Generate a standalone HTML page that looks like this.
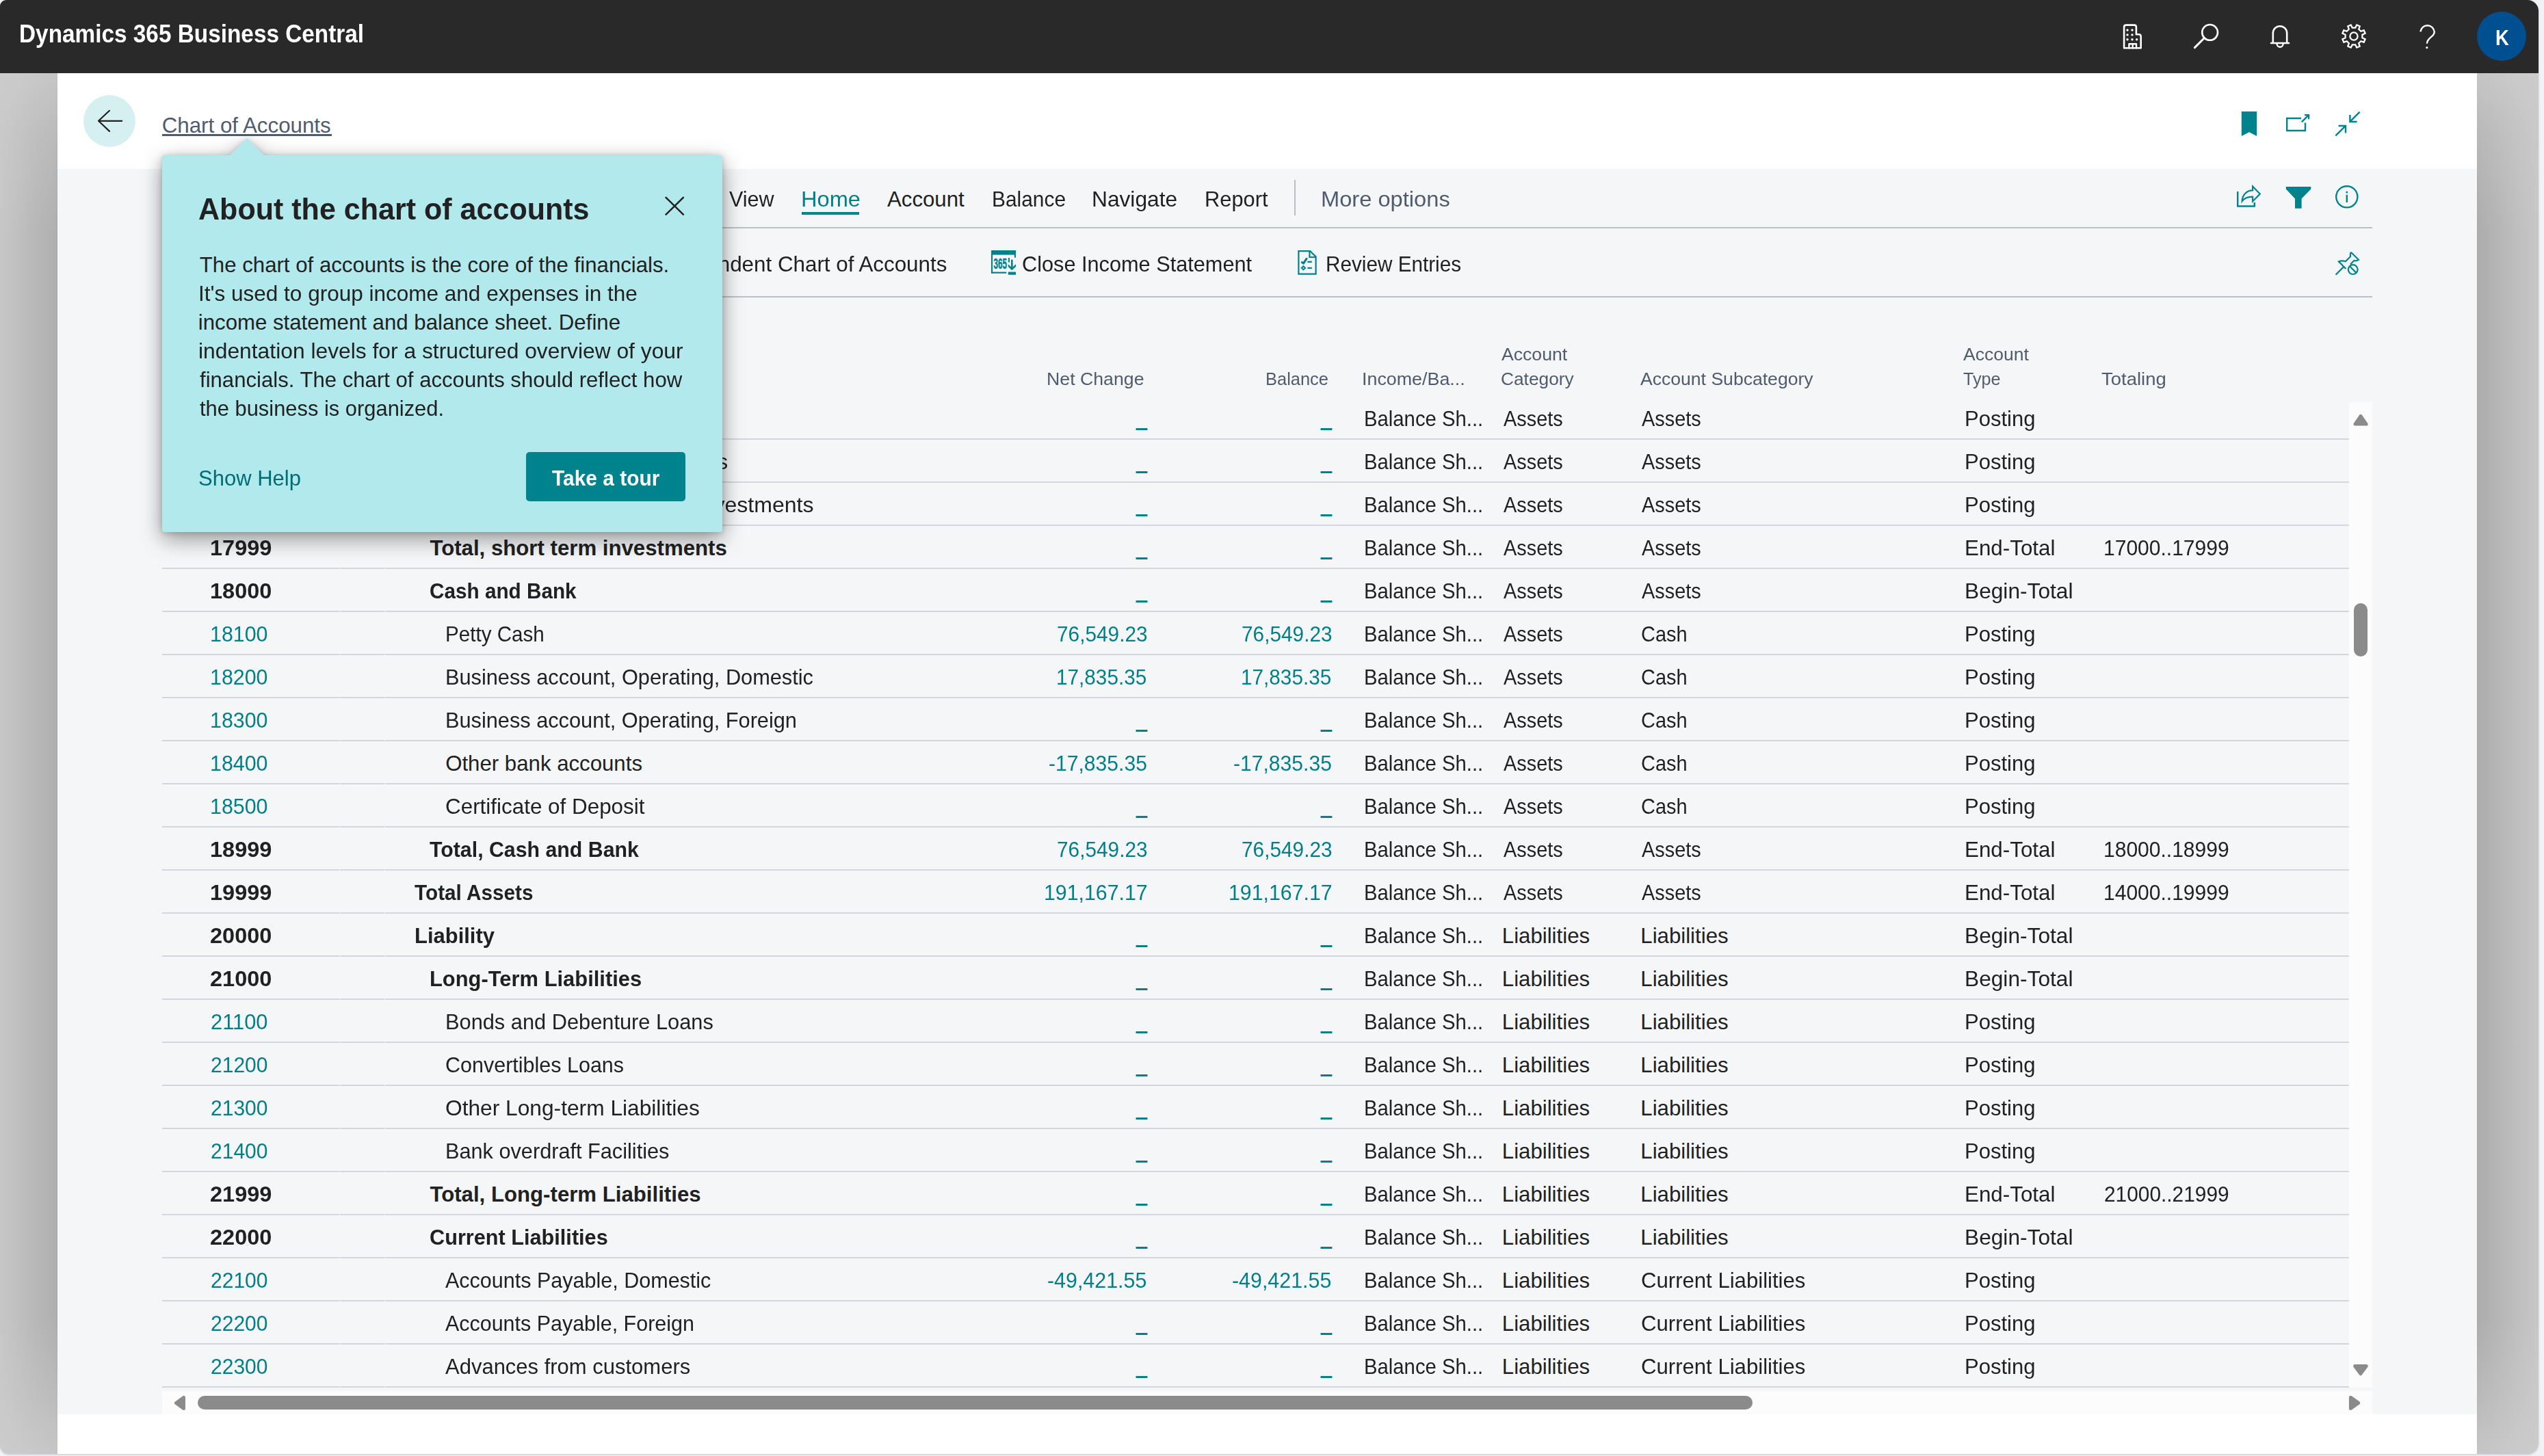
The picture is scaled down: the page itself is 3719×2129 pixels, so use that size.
<!DOCTYPE html>
<html lang="en">
<head>
<meta charset="utf-8">
<title>Chart of Accounts - Dynamics 365 Business Central</title>
<style>
*{box-sizing:border-box;margin:0;padding:0}
html,body{width:3719px;height:2129px;overflow:hidden;background:#f0f2f5;font-family:"Liberation Sans",sans-serif}
#app{position:absolute;left:0;top:0;width:3711px;height:2125.5px;background:#fff;border-radius:9px 16px 16px 13px;overflow:hidden;box-shadow:0 1px 3px rgba(0,0,0,.18)}
.abs{position:absolute}
.t{position:absolute;white-space:pre;font-kerning:normal;transform-origin:0 0;font-weight:400;margin:0}
.g{position:static}
.topbar{left:0;top:0;width:3711px;height:107px;background:#292929}
.lside{left:0;top:107px;width:84px;height:2020px;background:linear-gradient(to bottom,rgba(206,206,206,.75) 0,rgba(206,206,206,.35) 90px,rgba(206,206,206,0) 230px,rgba(206,206,206,0) 1820px,rgba(206,206,206,.4) 1940px,rgba(206,206,206,.75) 2020px),linear-gradient(to right,#c7c7c7 0,#bfbfbf 35%,#b7b7b7 62%,#b0b0b0 97%,#a8a8a8 100%)}
.rside{left:3621px;top:107px;width:90px;height:2020px;background:linear-gradient(to bottom,rgba(206,206,206,.75) 0,rgba(206,206,206,.35) 90px,rgba(206,206,206,0) 230px,rgba(206,206,206,0) 1820px,rgba(206,206,206,.4) 1940px,rgba(206,206,206,.75) 2020px),linear-gradient(to right,#a6a6a6 0,#adadad 2.5%,#b5b5b5 35%,#bebebe 62%,#c7c7c7 100%)}
.content{left:84px;top:247px;width:3537px;height:1821px;background:#f5f6f8}
.sep{left:237px;width:3231px;height:2px;background:#bcc0c9}
.rl{left:237px;width:3197px;height:2px;background:#d3d6dc}
.vtrack{left:3434px;top:588px;width:34px;height:1441px;background:#fcfcfc}
.htrack{left:237px;top:2034px;width:3231px;height:34px;background:#fcfcfc}
.thumb{background:#8b8b8b;border-radius:11px}
#tipwrap{position:absolute;left:0;top:0;width:3719px;height:2129px;filter:drop-shadow(0 10px 16px rgba(0,0,0,.34)) drop-shadow(0 1px 4px rgba(0,0,0,.22));pointer-events:none}
.tipbox{left:237px;top:227px;width:819px;height:550.5px;background:#b2e9ed;border-radius:4px}
.tiparrow{left:335px;top:202px;width:52px;height:26px;background:#b2e9ed;clip-path:polygon(50% 0,100% 100%,0 100%)}
.btn{left:769px;top:661px;width:233px;height:72px;background:#00838c;border-radius:5px}
svg{position:absolute;left:0;top:0;overflow:visible}
</style>
</head>
<body>
<div id="app">
  <div class="abs topbar"></div>
  <div class="abs lside"></div>
  <div class="abs rside"></div>
  <div class="abs content"></div>

  <!-- back button -->
  <div class="abs" style="left:122px;top:139px;width:76px;height:76px;border-radius:50%;background:#d6f0f2"></div>
  <!-- title underline -->
  <div class="abs" style="left:237px;top:196px;width:248px;height:2.6px;background:#505c6d"></div>

  <!-- menu bar lines -->
  <div class="abs sep" style="top:332px"></div>
  <div class="abs sep" style="top:433px"></div>
  <div class="abs" style="left:1892.3px;top:263px;width:2px;height:51.5px;background:#b9bdc6"></div>
  <div class="abs" style="left:1171.8px;top:310px;width:84.6px;height:4px;background:#00838c"></div>

  <!-- scroll tracks -->
  <div class="abs vtrack"></div>
  <div class="abs htrack"></div>
  <div class="abs thumb" style="left:3441px;top:882px;width:20px;height:78px"></div>
  <div class="abs thumb" style="left:288.6px;top:2041px;width:2273.5px;height:20.4px"></div>

  <!-- row lines -->
  <div class="abs rl" style="top:641px"></div>
  <div class="abs rl" style="top:704px"></div>
  <div class="abs rl" style="top:767px"></div>
  <div class="abs rl" style="top:830px"></div>
  <div class="abs rl" style="top:893px"></div>
  <div class="abs rl" style="top:956px"></div>
  <div class="abs rl" style="top:1019px"></div>
  <div class="abs rl" style="top:1082px"></div>
  <div class="abs rl" style="top:1145px"></div>
  <div class="abs rl" style="top:1208px"></div>
  <div class="abs rl" style="top:1271px"></div>
  <div class="abs rl" style="top:1334px"></div>
  <div class="abs rl" style="top:1397px"></div>
  <div class="abs rl" style="top:1460px"></div>
  <div class="abs rl" style="top:1523px"></div>
  <div class="abs rl" style="top:1586px"></div>
  <div class="abs rl" style="top:1649px"></div>
  <div class="abs rl" style="top:1712px"></div>
  <div class="abs rl" style="top:1775px"></div>
  <div class="abs rl" style="top:1838px"></div>
  <div class="abs rl" style="top:1901px"></div>
  <div class="abs rl" style="top:1964px"></div>
  <div class="abs rl" style="top:2027px"></div>

  <div class="abs" style="left:495.5px;top:588px;width:1.6px;height:1442px;background:rgba(245,246,248,.75)"></div>
  <div class="abs" style="left:561.5px;top:588px;width:1.6px;height:1442px;background:rgba(245,246,248,.75)"></div>

  <svg width="3719" height="2129" viewBox="0 0 3719 2129" fill="none">
    <!-- back arrow -->
    <path d="M178.2 176.8 H144 M160 161.8 L144 176.8 L160 191.9" stroke="#212121" stroke-width="2.2" stroke-linecap="round" stroke-linejoin="round"/>
    <!-- top bar icons -->
    <g stroke="#fff" stroke-width="2.6" stroke-linejoin="round" stroke-linecap="round">
      <path d="M3105.1 70.2 V39.6 Q3105.1 36.6 3108.1 36.6 H3119.9 Q3122.9 36.6 3122.9 39.6 V50.2 H3126.7 Q3129.7 50.2 3129.7 53.2 V70.2 Z"/>
      <path d="M3112.4 70.2 V64.2 H3123 V70.2 M3117.7 64.2 V70.2" stroke-width="2.4"/>
      <g fill="#fff" stroke="none">
        <circle cx="3110" cy="44" r="1.7"/><circle cx="3117" cy="44" r="1.7"/>
        <circle cx="3110" cy="50.9" r="1.7"/><circle cx="3117" cy="50.9" r="1.7"/>
        <circle cx="3110" cy="57.7" r="1.7"/><circle cx="3117" cy="57.7" r="1.7"/><circle cx="3123.7" cy="57.7" r="1.7"/>
      </g>
      <circle cx="3230.6" cy="47.4" r="11.4"/>
      <path d="M3222.2 55.8 L3208.4 69.6" stroke-width="2.9"/>
      <path d="M3322.8 63 V48.4 a10.2 10.2 0 0 1 20.4 0 V63" stroke-linecap="butt"/>
      <path d="M3320 63 H3346"/>
      <path d="M3328.6 64.2 a4.5 4.5 0 0 0 9 0" stroke-width="2.4"/>
      <path d="M3443.2 40.6 L3445.3 36.4 L3449.7 38.3 L3448.2 42.7 L3451.3 45.8 L3455.7 44.3 L3457.6 48.7 L3453.4 50.8 L3453.4 55.2 L3457.6 57.3 L3455.7 61.7 L3451.3 60.2 L3448.2 63.3 L3449.7 67.7 L3445.3 69.6 L3443.2 65.4 L3438.8 65.4 L3436.7 69.6 L3432.3 67.7 L3433.8 63.3 L3430.7 60.2 L3426.3 61.7 L3424.4 57.3 L3428.6 55.2 L3428.6 50.8 L3424.4 48.7 L3426.3 44.3 L3430.7 45.8 L3433.8 42.7 L3432.3 38.3 L3436.7 36.4 L3438.8 40.6 Z" stroke-width="2.3" stroke-linejoin="miter"/>
      <circle cx="3441" cy="53" r="5.6" stroke-width="2.3"/>
      <path d="M3538.4 46.4 A10.2 10.2 0 0 1 3558.7 46.4 C3558.7 54.5 3548 54.5 3548 63.8" stroke-width="2.4" stroke-linecap="butt"/>
      <circle cx="3547.8" cy="69.6" r="1.6" fill="#fff" stroke="none"/>
    </g>
    <circle cx="3657" cy="53" r="36" fill="#005091"/>
    <!-- page header icons -->
    <path d="M3276.8 163 H3299.2 V199 L3288 193.3 L3276.8 199 Z" fill="#00838c"/>
    <g stroke="#00838c" stroke-width="2.4" stroke-linejoin="miter" stroke-linecap="butt">
      <path d="M3364 173 H3343.2 V191 H3370 V179.4 M3364.8 178.4 L3375 168.2 M3369 168.1 H3375.1 V174.2"/>
      <path d="M3449.6 163.6 L3435.4 177.8 M3435.4 168 V178 H3445.6 M3414.4 198.4 L3429 183.8 M3418.6 184 H3429 V194.4"/>
      <!-- share -->
      <path d="M3271.2 280 V301.5 H3295.8 V296"/>
      <path d="M3293.1 272.6 L3303.8 283.6 L3293.1 294.4 V287.6 C3286 287.6 3280.6 290 3277.6 294.2 C3278 285 3284 278.6 3293.1 278.4 Z" stroke-width="2.2"/>
      <!-- info -->
      <circle cx="3430.8" cy="287.8" r="15.6"/>
      <path d="M3430.8 284.8 V296"/>
      <!-- pin -->
      <path d="M3436.8 368.7 L3447.9 379.8 C3445.4 381.6 3443.2 381.5 3441.4 381 L3436 386.5 M3436.8 368.7 C3435.6 371.4 3435.4 373.4 3436 375.2 L3428.8 382.3 C3425 381 3421.6 381.2 3418.8 382.4 L3429.4 393 M3426.4 389.9 L3414.6 401.7" stroke-width="2.2"/>
    </g>
    <circle cx="3430.8" cy="281" r="1.5" fill="#00838c"/>
    <path d="M3341.8 273 H3378.3 V276.6 L3364.6 290.6 V304.8 H3355 V290.6 L3341.8 276.6 Z" fill="#00838c"/>
    <circle cx="3439.7" cy="394.1" r="6.9" fill="#f5f6f8" stroke="#00838c" stroke-width="2.2"/>
    <path d="M3434.9 389.3 L3444.5 398.9" stroke="#00838c" stroke-width="2.2"/>
    <!-- Close Income Statement icon -->
    <g fill="#00838c">
      <rect x="1449" y="366" width="36" height="6.6"/>
      <rect x="1449" y="366" width="2.1" height="33.8"/>
      <rect x="1449" y="397.6" width="22.3" height="2.2"/>
      <rect x="1482.9" y="366" width="2.1" height="10.7"/>
      <rect x="1474" y="377" width="2" height="6.6"/>
      <rect x="1478" y="379.6" width="2.6" height="12"/>
      <path d="M1473.8 386.3 L1479.3 391.6 L1485 386.3 V390 L1479.3 395.3 L1473.8 390 Z"/>
      <rect x="1473.8" y="397.6" width="11.2" height="4.2"/>
      <text x="1452.6" y="392.8" font-family="Liberation Sans, sans-serif" font-weight="700" font-size="21.5" textLength="19.4" lengthAdjust="spacingAndGlyphs" stroke="#00838c" stroke-width="0.5">365</text>
    </g>
    <!-- Review Entries icon -->
    <g stroke="#00838c" stroke-width="2.2" stroke-linejoin="miter">
      <path d="M1898.4 367.1 H1915.2 L1923.6 375.2 V400.7 H1898.4 Z"/>
      <path d="M1914.4 367.1 V376 H1923.6"/>
      <path d="M1911.4 382.8 H1917.8 M1911.4 391.8 H1917.8"/>
      <path d="M1903.4 383.6 L1905.6 384.9 L1910 378.3" stroke-width="3.1" stroke-linecap="round"/>
      <path d="M1905.4 389.2 L1908 391.8 L1905.4 394.4 L1902.8 391.8 Z" stroke-width="2"/>
    </g>
    <!-- scrollbar arrows -->
    <g fill="#8b8b8b" stroke="#8b8b8b" stroke-width="5" stroke-linejoin="round">
      <path d="M3451 608.5 L3459.1 620.1 H3443 Z"/>
      <path d="M3450.9 2008.8 L3459.2 1997.6 H3442.6 Z"/>
      <path d="M257.5 2051.5 L268.5 2043.5 V2059.5 Z"/>
      <path d="M3447.6 2051.4 L3436.4 2043.3 V2059.6 Z"/>
    </g>
  </svg>

  <header class="g">
      <span class="t" style="left:27.5px;top:28px;font-size:37.4px;line-height:42px;color:#ffffff;font-weight:700;transform:scaleX(0.8918);">Dynamics 365 Business Central</span>
      <span class="t" style="left:3647.7px;top:37px;font-size:32px;line-height:36px;color:#ffffff;font-weight:700;transform:scaleX(0.8571);">K</span>
  </header>
  <div class="g">
      <h1 class="t" style="left:236.7px;top:166px;font-size:31.3px;line-height:35px;color:#505c6d;">Chart of Accounts</h1>
  </div>
  <nav class="g" role="menubar">
      <span class="t" role="menuitem" style="left:1065.8px;top:274px;font-size:31.2px;line-height:35px;color:#212121;transform:scaleX(0.9761);">View</span>
      <span class="t" role="menuitem" style="left:1170.5px;top:274px;font-size:31.2px;line-height:35px;color:#007f89;transform:scaleX(1.0445);">Home</span>
      <span class="t" role="menuitem" style="left:1297.0px;top:274px;font-size:31.2px;line-height:35px;color:#212121;">Account</span>
      <span class="t" role="menuitem" style="left:1449.9px;top:274px;font-size:31.2px;line-height:35px;color:#212121;transform:scaleX(0.9583);">Balance</span>
      <span class="t" role="menuitem" style="left:1596.3px;top:274px;font-size:31.2px;line-height:35px;color:#212121;transform:scaleX(1.0163);">Navigate</span>
      <span class="t" role="menuitem" style="left:1760.6px;top:274px;font-size:31.2px;line-height:35px;color:#212121;transform:scaleX(0.9887);">Report</span>
      <span class="t" role="menuitem" style="left:1931.2px;top:274px;font-size:31.2px;line-height:35px;color:#505c6d;transform:scaleX(1.0467);">More options</span>
  </nav>
  <div class="g" role="toolbar">
      <span class="t" role="button" style="left:1040.5px;top:369px;font-size:31.2px;line-height:35px;color:#212121;transform:scaleX(1.0054);">Indent Chart of Accounts</span>
      <span class="t" role="button" style="left:1494.0px;top:369px;font-size:31.2px;line-height:35px;color:#212121;transform:scaleX(0.9841);">Close Income Statement</span>
      <span class="t" role="button" style="left:1937.5px;top:369px;font-size:31.2px;line-height:35px;color:#212121;transform:scaleX(0.9523);">Review Entries</span>
  </div>
  <div class="g" role="table">
    <div class="g" role="row">
      <span class="t" role="columnheader" style="left:307.0px;top:539px;font-size:26.2px;line-height:30px;color:#505c6d;">No.</span>
      <span class="t" role="columnheader" style="left:605.0px;top:539px;font-size:26.2px;line-height:30px;color:#505c6d;">Name</span>
      <span class="t" role="columnheader" style="left:1529.5px;top:539px;font-size:26.2px;line-height:30px;color:#505c6d;transform:scaleX(1.0197);">Net Change</span>
      <span class="t" role="columnheader" style="left:1850.4px;top:539px;font-size:26.2px;line-height:30px;color:#505c6d;transform:scaleX(0.9721);">Balance</span>
      <span class="t" role="columnheader" style="left:1990.5px;top:539px;font-size:26.2px;line-height:30px;color:#505c6d;transform:scaleX(1.0250);">Income/Ba...</span>
      <span class="t" role="columnheader" style="left:2195.0px;top:503px;font-size:26.2px;line-height:30px;color:#505c6d;transform:scaleX(1.0163);">Account</span>
      <span class="t" role="columnheader" style="left:2194.0px;top:539px;font-size:26.2px;line-height:30px;color:#505c6d;transform:scaleX(1.0041);">Category</span>
      <span class="t" role="columnheader" style="left:2397.5px;top:539px;font-size:26.2px;line-height:30px;color:#505c6d;transform:scaleX(1.0146);">Account Subcategory</span>
      <span class="t" role="columnheader" style="left:2870.0px;top:503px;font-size:26.2px;line-height:30px;color:#505c6d;transform:scaleX(1.0131);">Account</span>
      <span class="t" role="columnheader" style="left:2870.0px;top:539px;font-size:26.2px;line-height:30px;color:#505c6d;transform:scaleX(0.9607);">Type</span>
      <span class="t" role="columnheader" style="left:3072.4px;top:539px;font-size:26.2px;line-height:30px;color:#505c6d;transform:scaleX(1.0496);">Totaling</span>
    </div>
    <div class="g" role="row">
      <span class="t" role="cell" style="left:307.3px;top:595px;font-size:31.2px;line-height:35px;color:#007f89;transform:scaleX(0.9742);">17100</span>
      <span class="t" role="cell" style="left:651.2px;top:595px;font-size:31.2px;line-height:35px;color:#212121;transform:scaleX(1.0112);">Convertible debt instruments</span>
      <span class="t" role="cell" style="left:1661.0px;top:578px;font-size:46px;line-height:52px;color:#007f89;transform:scaleX(0.6286);">_</span>
      <span class="t" role="cell" style="left:1931.0px;top:578px;font-size:46px;line-height:52px;color:#007f89;transform:scaleX(0.6286);">_</span>
      <span class="t" role="cell" style="left:1994.3px;top:595px;font-size:31.2px;line-height:35px;color:#212121;transform:scaleX(0.9389);">Balance Sh...</span>
      <span class="t" role="cell" style="left:2197.8px;top:595px;font-size:31.2px;line-height:35px;color:#212121;transform:scaleX(0.9258);">Assets</span>
      <span class="t" role="cell" style="left:2400.3px;top:595px;font-size:31.2px;line-height:35px;color:#212121;transform:scaleX(0.9258);">Assets</span>
      <span class="t" role="cell" style="left:2871.5px;top:595px;font-size:31.2px;line-height:35px;color:#212121;transform:scaleX(0.9942);">Posting</span>
    </div>
    <div class="g" role="row">
      <span class="t" role="cell" style="left:307.3px;top:658px;font-size:31.2px;line-height:35px;color:#007f89;transform:scaleX(0.9742);">17200</span>
      <span class="t" role="cell" style="left:651.2px;top:658px;font-size:31.2px;line-height:35px;color:#212121;transform:scaleX(1.0189);">Other short-term Investments</span>
      <span class="t" role="cell" style="left:1661.0px;top:641px;font-size:46px;line-height:52px;color:#007f89;transform:scaleX(0.6286);">_</span>
      <span class="t" role="cell" style="left:1931.0px;top:641px;font-size:46px;line-height:52px;color:#007f89;transform:scaleX(0.6286);">_</span>
      <span class="t" role="cell" style="left:1994.3px;top:658px;font-size:31.2px;line-height:35px;color:#212121;transform:scaleX(0.9389);">Balance Sh...</span>
      <span class="t" role="cell" style="left:2197.8px;top:658px;font-size:31.2px;line-height:35px;color:#212121;transform:scaleX(0.9258);">Assets</span>
      <span class="t" role="cell" style="left:2400.3px;top:658px;font-size:31.2px;line-height:35px;color:#212121;transform:scaleX(0.9258);">Assets</span>
      <span class="t" role="cell" style="left:2871.5px;top:658px;font-size:31.2px;line-height:35px;color:#212121;transform:scaleX(0.9942);">Posting</span>
    </div>
    <div class="g" role="row">
      <span class="t" role="cell" style="left:307.3px;top:721px;font-size:31.2px;line-height:35px;color:#007f89;transform:scaleX(0.9742);">17300</span>
      <span class="t" role="cell" style="left:651.2px;top:721px;font-size:31.2px;line-height:35px;color:#212121;transform:scaleX(1.0264);">Write-down of Short-term Investments</span>
      <span class="t" role="cell" style="left:1661.0px;top:704px;font-size:46px;line-height:52px;color:#007f89;transform:scaleX(0.6286);">_</span>
      <span class="t" role="cell" style="left:1931.0px;top:704px;font-size:46px;line-height:52px;color:#007f89;transform:scaleX(0.6286);">_</span>
      <span class="t" role="cell" style="left:1994.3px;top:721px;font-size:31.2px;line-height:35px;color:#212121;transform:scaleX(0.9389);">Balance Sh...</span>
      <span class="t" role="cell" style="left:2197.8px;top:721px;font-size:31.2px;line-height:35px;color:#212121;transform:scaleX(0.9258);">Assets</span>
      <span class="t" role="cell" style="left:2400.3px;top:721px;font-size:31.2px;line-height:35px;color:#212121;transform:scaleX(0.9258);">Assets</span>
      <span class="t" role="cell" style="left:2871.5px;top:721px;font-size:31.2px;line-height:35px;color:#212121;transform:scaleX(0.9942);">Posting</span>
    </div>
    <div class="g" role="row">
      <span class="t" role="cell" style="left:307.0px;top:784px;font-size:31.2px;line-height:35px;color:#212121;font-weight:700;transform:scaleX(1.0424);">17999</span>
      <span class="t" role="cell" style="left:628.4px;top:784px;font-size:31.2px;line-height:35px;color:#212121;font-weight:700;">Total, short term investments</span>
      <span class="t" role="cell" style="left:1661.0px;top:767px;font-size:46px;line-height:52px;color:#007f89;transform:scaleX(0.6286);">_</span>
      <span class="t" role="cell" style="left:1931.0px;top:767px;font-size:46px;line-height:52px;color:#007f89;transform:scaleX(0.6286);">_</span>
      <span class="t" role="cell" style="left:1994.3px;top:784px;font-size:31.2px;line-height:35px;color:#212121;transform:scaleX(0.9389);">Balance Sh...</span>
      <span class="t" role="cell" style="left:2197.8px;top:784px;font-size:31.2px;line-height:35px;color:#212121;transform:scaleX(0.9258);">Assets</span>
      <span class="t" role="cell" style="left:2400.3px;top:784px;font-size:31.2px;line-height:35px;color:#212121;transform:scaleX(0.9258);">Assets</span>
      <span class="t" role="cell" style="left:2871.5px;top:784px;font-size:31.2px;line-height:35px;color:#212121;transform:scaleX(1.0053);">End-Total</span>
      <span class="t" role="cell" style="left:3074.7px;top:784px;font-size:31.2px;line-height:35px;color:#212121;transform:scaleX(0.9625);">17000..17999</span>
    </div>
    <div class="g" role="row">
      <span class="t" role="cell" style="left:307.0px;top:847px;font-size:31.2px;line-height:35px;color:#212121;font-weight:700;transform:scaleX(1.0424);">18000</span>
      <span class="t" role="cell" style="left:628.4px;top:847px;font-size:31.2px;line-height:35px;color:#212121;font-weight:700;transform:scaleX(0.9524);">Cash and Bank</span>
      <span class="t" role="cell" style="left:1661.0px;top:830px;font-size:46px;line-height:52px;color:#007f89;transform:scaleX(0.6286);">_</span>
      <span class="t" role="cell" style="left:1931.0px;top:830px;font-size:46px;line-height:52px;color:#007f89;transform:scaleX(0.6286);">_</span>
      <span class="t" role="cell" style="left:1994.3px;top:847px;font-size:31.2px;line-height:35px;color:#212121;transform:scaleX(0.9389);">Balance Sh...</span>
      <span class="t" role="cell" style="left:2197.8px;top:847px;font-size:31.2px;line-height:35px;color:#212121;transform:scaleX(0.9258);">Assets</span>
      <span class="t" role="cell" style="left:2400.3px;top:847px;font-size:31.2px;line-height:35px;color:#212121;transform:scaleX(0.9258);">Assets</span>
      <span class="t" role="cell" style="left:2871.5px;top:847px;font-size:31.2px;line-height:35px;color:#212121;transform:scaleX(1.0158);">Begin-Total</span>
    </div>
    <div class="g" role="row">
      <span class="t" role="cell" style="left:307.3px;top:910px;font-size:31.2px;line-height:35px;color:#007f89;transform:scaleX(0.9742);">18100</span>
      <span class="t" role="cell" style="left:651.2px;top:910px;font-size:31.2px;line-height:35px;color:#212121;transform:scaleX(0.9491);">Petty Cash</span>
      <span class="t" role="cell" style="left:1544.9px;top:910px;font-size:31.2px;line-height:35px;color:#007f89;transform:scaleX(0.9553);">76,549.23</span>
      <span class="t" role="cell" style="left:1814.9px;top:910px;font-size:31.2px;line-height:35px;color:#007f89;transform:scaleX(0.9553);">76,549.23</span>
      <span class="t" role="cell" style="left:1994.3px;top:910px;font-size:31.2px;line-height:35px;color:#212121;transform:scaleX(0.9389);">Balance Sh...</span>
      <span class="t" role="cell" style="left:2197.8px;top:910px;font-size:31.2px;line-height:35px;color:#212121;transform:scaleX(0.9258);">Assets</span>
      <span class="t" role="cell" style="left:2399.4px;top:910px;font-size:31.2px;line-height:35px;color:#212121;transform:scaleX(0.9282);">Cash</span>
      <span class="t" role="cell" style="left:2871.5px;top:910px;font-size:31.2px;line-height:35px;color:#212121;transform:scaleX(0.9942);">Posting</span>
    </div>
    <div class="g" role="row">
      <span class="t" role="cell" style="left:307.3px;top:973px;font-size:31.2px;line-height:35px;color:#007f89;transform:scaleX(0.9742);">18200</span>
      <span class="t" role="cell" style="left:651.2px;top:973px;font-size:31.2px;line-height:35px;color:#212121;transform:scaleX(0.9852);">Business account, Operating, Domestic</span>
      <span class="t" role="cell" style="left:1544.3px;top:973px;font-size:31.2px;line-height:35px;color:#007f89;transform:scaleX(0.9531);">17,835.35</span>
      <span class="t" role="cell" style="left:1814.3px;top:973px;font-size:31.2px;line-height:35px;color:#007f89;transform:scaleX(0.9531);">17,835.35</span>
      <span class="t" role="cell" style="left:1994.3px;top:973px;font-size:31.2px;line-height:35px;color:#212121;transform:scaleX(0.9389);">Balance Sh...</span>
      <span class="t" role="cell" style="left:2197.8px;top:973px;font-size:31.2px;line-height:35px;color:#212121;transform:scaleX(0.9258);">Assets</span>
      <span class="t" role="cell" style="left:2399.4px;top:973px;font-size:31.2px;line-height:35px;color:#212121;transform:scaleX(0.9282);">Cash</span>
      <span class="t" role="cell" style="left:2871.5px;top:973px;font-size:31.2px;line-height:35px;color:#212121;transform:scaleX(0.9942);">Posting</span>
    </div>
    <div class="g" role="row">
      <span class="t" role="cell" style="left:307.3px;top:1036px;font-size:31.2px;line-height:35px;color:#007f89;transform:scaleX(0.9742);">18300</span>
      <span class="t" role="cell" style="left:651.2px;top:1036px;font-size:31.2px;line-height:35px;color:#212121;transform:scaleX(0.9849);">Business account, Operating, Foreign</span>
      <span class="t" role="cell" style="left:1661.0px;top:1019px;font-size:46px;line-height:52px;color:#007f89;transform:scaleX(0.6286);">_</span>
      <span class="t" role="cell" style="left:1931.0px;top:1019px;font-size:46px;line-height:52px;color:#007f89;transform:scaleX(0.6286);">_</span>
      <span class="t" role="cell" style="left:1994.3px;top:1036px;font-size:31.2px;line-height:35px;color:#212121;transform:scaleX(0.9389);">Balance Sh...</span>
      <span class="t" role="cell" style="left:2197.8px;top:1036px;font-size:31.2px;line-height:35px;color:#212121;transform:scaleX(0.9258);">Assets</span>
      <span class="t" role="cell" style="left:2399.4px;top:1036px;font-size:31.2px;line-height:35px;color:#212121;transform:scaleX(0.9282);">Cash</span>
      <span class="t" role="cell" style="left:2871.5px;top:1036px;font-size:31.2px;line-height:35px;color:#212121;transform:scaleX(0.9942);">Posting</span>
    </div>
    <div class="g" role="row">
      <span class="t" role="cell" style="left:307.3px;top:1099px;font-size:31.2px;line-height:35px;color:#007f89;transform:scaleX(0.9742);">18400</span>
      <span class="t" role="cell" style="left:651.2px;top:1099px;font-size:31.2px;line-height:35px;color:#212121;">Other bank accounts</span>
      <span class="t" role="cell" style="left:1532.6px;top:1099px;font-size:31.2px;line-height:35px;color:#007f89;transform:scaleX(0.9649);">-17,835.35</span>
      <span class="t" role="cell" style="left:1802.6px;top:1099px;font-size:31.2px;line-height:35px;color:#007f89;transform:scaleX(0.9649);">-17,835.35</span>
      <span class="t" role="cell" style="left:1994.3px;top:1099px;font-size:31.2px;line-height:35px;color:#212121;transform:scaleX(0.9389);">Balance Sh...</span>
      <span class="t" role="cell" style="left:2197.8px;top:1099px;font-size:31.2px;line-height:35px;color:#212121;transform:scaleX(0.9258);">Assets</span>
      <span class="t" role="cell" style="left:2399.4px;top:1099px;font-size:31.2px;line-height:35px;color:#212121;transform:scaleX(0.9282);">Cash</span>
      <span class="t" role="cell" style="left:2871.5px;top:1099px;font-size:31.2px;line-height:35px;color:#212121;transform:scaleX(0.9942);">Posting</span>
    </div>
    <div class="g" role="row">
      <span class="t" role="cell" style="left:307.3px;top:1162px;font-size:31.2px;line-height:35px;color:#007f89;transform:scaleX(0.9742);">18500</span>
      <span class="t" role="cell" style="left:651.2px;top:1162px;font-size:31.2px;line-height:35px;color:#212121;transform:scaleX(1.0069);">Certificate of Deposit</span>
      <span class="t" role="cell" style="left:1661.0px;top:1145px;font-size:46px;line-height:52px;color:#007f89;transform:scaleX(0.6286);">_</span>
      <span class="t" role="cell" style="left:1931.0px;top:1145px;font-size:46px;line-height:52px;color:#007f89;transform:scaleX(0.6286);">_</span>
      <span class="t" role="cell" style="left:1994.3px;top:1162px;font-size:31.2px;line-height:35px;color:#212121;transform:scaleX(0.9389);">Balance Sh...</span>
      <span class="t" role="cell" style="left:2197.8px;top:1162px;font-size:31.2px;line-height:35px;color:#212121;transform:scaleX(0.9258);">Assets</span>
      <span class="t" role="cell" style="left:2399.4px;top:1162px;font-size:31.2px;line-height:35px;color:#212121;transform:scaleX(0.9282);">Cash</span>
      <span class="t" role="cell" style="left:2871.5px;top:1162px;font-size:31.2px;line-height:35px;color:#212121;transform:scaleX(0.9942);">Posting</span>
    </div>
    <div class="g" role="row">
      <span class="t" role="cell" style="left:307.0px;top:1225px;font-size:31.2px;line-height:35px;color:#212121;font-weight:700;transform:scaleX(1.0424);">18999</span>
      <span class="t" role="cell" style="left:628.4px;top:1225px;font-size:31.2px;line-height:35px;color:#212121;font-weight:700;transform:scaleX(0.9716);">Total, Cash and Bank</span>
      <span class="t" role="cell" style="left:1544.9px;top:1225px;font-size:31.2px;line-height:35px;color:#007f89;transform:scaleX(0.9553);">76,549.23</span>
      <span class="t" role="cell" style="left:1814.9px;top:1225px;font-size:31.2px;line-height:35px;color:#007f89;transform:scaleX(0.9553);">76,549.23</span>
      <span class="t" role="cell" style="left:1994.3px;top:1225px;font-size:31.2px;line-height:35px;color:#212121;transform:scaleX(0.9389);">Balance Sh...</span>
      <span class="t" role="cell" style="left:2197.8px;top:1225px;font-size:31.2px;line-height:35px;color:#212121;transform:scaleX(0.9258);">Assets</span>
      <span class="t" role="cell" style="left:2400.3px;top:1225px;font-size:31.2px;line-height:35px;color:#212121;transform:scaleX(0.9258);">Assets</span>
      <span class="t" role="cell" style="left:2871.5px;top:1225px;font-size:31.2px;line-height:35px;color:#212121;transform:scaleX(1.0053);">End-Total</span>
      <span class="t" role="cell" style="left:3074.7px;top:1225px;font-size:31.2px;line-height:35px;color:#212121;transform:scaleX(0.9625);">18000..18999</span>
    </div>
    <div class="g" role="row">
      <span class="t" role="cell" style="left:307.0px;top:1288px;font-size:31.2px;line-height:35px;color:#212121;font-weight:700;transform:scaleX(1.0424);">19999</span>
      <span class="t" role="cell" style="left:606.0px;top:1288px;font-size:31.2px;line-height:35px;color:#212121;font-weight:700;transform:scaleX(0.9536);">Total Assets</span>
      <span class="t" role="cell" style="left:1525.9px;top:1288px;font-size:31.2px;line-height:35px;color:#007f89;transform:scaleX(0.9716);">191,167.17</span>
      <span class="t" role="cell" style="left:1795.9px;top:1288px;font-size:31.2px;line-height:35px;color:#007f89;transform:scaleX(0.9716);">191,167.17</span>
      <span class="t" role="cell" style="left:1994.3px;top:1288px;font-size:31.2px;line-height:35px;color:#212121;transform:scaleX(0.9389);">Balance Sh...</span>
      <span class="t" role="cell" style="left:2197.8px;top:1288px;font-size:31.2px;line-height:35px;color:#212121;transform:scaleX(0.9258);">Assets</span>
      <span class="t" role="cell" style="left:2400.3px;top:1288px;font-size:31.2px;line-height:35px;color:#212121;transform:scaleX(0.9258);">Assets</span>
      <span class="t" role="cell" style="left:2871.5px;top:1288px;font-size:31.2px;line-height:35px;color:#212121;transform:scaleX(1.0053);">End-Total</span>
      <span class="t" role="cell" style="left:3074.7px;top:1288px;font-size:31.2px;line-height:35px;color:#212121;transform:scaleX(0.9625);">14000..19999</span>
    </div>
    <div class="g" role="row">
      <span class="t" role="cell" style="left:307.0px;top:1351px;font-size:31.2px;line-height:35px;color:#212121;font-weight:700;transform:scaleX(1.0424);">20000</span>
      <span class="t" role="cell" style="left:606.0px;top:1351px;font-size:31.2px;line-height:35px;color:#212121;font-weight:700;transform:scaleX(0.9925);">Liability</span>
      <span class="t" role="cell" style="left:1661.0px;top:1334px;font-size:46px;line-height:52px;color:#007f89;transform:scaleX(0.6286);">_</span>
      <span class="t" role="cell" style="left:1931.0px;top:1334px;font-size:46px;line-height:52px;color:#007f89;transform:scaleX(0.6286);">_</span>
      <span class="t" role="cell" style="left:1994.3px;top:1351px;font-size:31.2px;line-height:35px;color:#212121;transform:scaleX(0.9389);">Balance Sh...</span>
      <span class="t" role="cell" style="left:2195.8px;top:1351px;font-size:31.2px;line-height:35px;color:#212121;">Liabilities</span>
      <span class="t" role="cell" style="left:2398.3px;top:1351px;font-size:31.2px;line-height:35px;color:#212121;">Liabilities</span>
      <span class="t" role="cell" style="left:2871.5px;top:1351px;font-size:31.2px;line-height:35px;color:#212121;transform:scaleX(1.0158);">Begin-Total</span>
    </div>
    <div class="g" role="row">
      <span class="t" role="cell" style="left:307.0px;top:1414px;font-size:31.2px;line-height:35px;color:#212121;font-weight:700;transform:scaleX(1.0424);">21000</span>
      <span class="t" role="cell" style="left:628.4px;top:1414px;font-size:31.2px;line-height:35px;color:#212121;font-weight:700;transform:scaleX(0.9907);">Long-Term Liabilities</span>
      <span class="t" role="cell" style="left:1661.0px;top:1397px;font-size:46px;line-height:52px;color:#007f89;transform:scaleX(0.6286);">_</span>
      <span class="t" role="cell" style="left:1931.0px;top:1397px;font-size:46px;line-height:52px;color:#007f89;transform:scaleX(0.6286);">_</span>
      <span class="t" role="cell" style="left:1994.3px;top:1414px;font-size:31.2px;line-height:35px;color:#212121;transform:scaleX(0.9389);">Balance Sh...</span>
      <span class="t" role="cell" style="left:2195.8px;top:1414px;font-size:31.2px;line-height:35px;color:#212121;">Liabilities</span>
      <span class="t" role="cell" style="left:2398.3px;top:1414px;font-size:31.2px;line-height:35px;color:#212121;">Liabilities</span>
      <span class="t" role="cell" style="left:2871.5px;top:1414px;font-size:31.2px;line-height:35px;color:#212121;transform:scaleX(1.0158);">Begin-Total</span>
    </div>
    <div class="g" role="row">
      <span class="t" role="cell" style="left:308.2px;top:1477px;font-size:31.2px;line-height:35px;color:#007f89;transform:scaleX(0.9896);">21100</span>
      <span class="t" role="cell" style="left:651.2px;top:1477px;font-size:31.2px;line-height:35px;color:#212121;transform:scaleX(0.9867);">Bonds and Debenture Loans</span>
      <span class="t" role="cell" style="left:1661.0px;top:1460px;font-size:46px;line-height:52px;color:#007f89;transform:scaleX(0.6286);">_</span>
      <span class="t" role="cell" style="left:1931.0px;top:1460px;font-size:46px;line-height:52px;color:#007f89;transform:scaleX(0.6286);">_</span>
      <span class="t" role="cell" style="left:1994.3px;top:1477px;font-size:31.2px;line-height:35px;color:#212121;transform:scaleX(0.9389);">Balance Sh...</span>
      <span class="t" role="cell" style="left:2195.8px;top:1477px;font-size:31.2px;line-height:35px;color:#212121;">Liabilities</span>
      <span class="t" role="cell" style="left:2398.3px;top:1477px;font-size:31.2px;line-height:35px;color:#212121;">Liabilities</span>
      <span class="t" role="cell" style="left:2871.5px;top:1477px;font-size:31.2px;line-height:35px;color:#212121;transform:scaleX(0.9942);">Posting</span>
    </div>
    <div class="g" role="row">
      <span class="t" role="cell" style="left:308.2px;top:1540px;font-size:31.2px;line-height:35px;color:#007f89;transform:scaleX(0.9628);">21200</span>
      <span class="t" role="cell" style="left:651.2px;top:1540px;font-size:31.2px;line-height:35px;color:#212121;transform:scaleX(0.9779);">Convertibles Loans</span>
      <span class="t" role="cell" style="left:1661.0px;top:1523px;font-size:46px;line-height:52px;color:#007f89;transform:scaleX(0.6286);">_</span>
      <span class="t" role="cell" style="left:1931.0px;top:1523px;font-size:46px;line-height:52px;color:#007f89;transform:scaleX(0.6286);">_</span>
      <span class="t" role="cell" style="left:1994.3px;top:1540px;font-size:31.2px;line-height:35px;color:#212121;transform:scaleX(0.9389);">Balance Sh...</span>
      <span class="t" role="cell" style="left:2195.8px;top:1540px;font-size:31.2px;line-height:35px;color:#212121;">Liabilities</span>
      <span class="t" role="cell" style="left:2398.3px;top:1540px;font-size:31.2px;line-height:35px;color:#212121;">Liabilities</span>
      <span class="t" role="cell" style="left:2871.5px;top:1540px;font-size:31.2px;line-height:35px;color:#212121;transform:scaleX(0.9942);">Posting</span>
    </div>
    <div class="g" role="row">
      <span class="t" role="cell" style="left:308.2px;top:1603px;font-size:31.2px;line-height:35px;color:#007f89;transform:scaleX(0.9628);">21300</span>
      <span class="t" role="cell" style="left:651.2px;top:1603px;font-size:31.2px;line-height:35px;color:#212121;transform:scaleX(1.0165);">Other Long-term Liabilities</span>
      <span class="t" role="cell" style="left:1661.0px;top:1586px;font-size:46px;line-height:52px;color:#007f89;transform:scaleX(0.6286);">_</span>
      <span class="t" role="cell" style="left:1931.0px;top:1586px;font-size:46px;line-height:52px;color:#007f89;transform:scaleX(0.6286);">_</span>
      <span class="t" role="cell" style="left:1994.3px;top:1603px;font-size:31.2px;line-height:35px;color:#212121;transform:scaleX(0.9389);">Balance Sh...</span>
      <span class="t" role="cell" style="left:2195.8px;top:1603px;font-size:31.2px;line-height:35px;color:#212121;">Liabilities</span>
      <span class="t" role="cell" style="left:2398.3px;top:1603px;font-size:31.2px;line-height:35px;color:#212121;">Liabilities</span>
      <span class="t" role="cell" style="left:2871.5px;top:1603px;font-size:31.2px;line-height:35px;color:#212121;transform:scaleX(0.9942);">Posting</span>
    </div>
    <div class="g" role="row">
      <span class="t" role="cell" style="left:308.2px;top:1666px;font-size:31.2px;line-height:35px;color:#007f89;transform:scaleX(0.9628);">21400</span>
      <span class="t" role="cell" style="left:651.2px;top:1666px;font-size:31.2px;line-height:35px;color:#212121;transform:scaleX(0.9837);">Bank overdraft Facilities</span>
      <span class="t" role="cell" style="left:1661.0px;top:1649px;font-size:46px;line-height:52px;color:#007f89;transform:scaleX(0.6286);">_</span>
      <span class="t" role="cell" style="left:1931.0px;top:1649px;font-size:46px;line-height:52px;color:#007f89;transform:scaleX(0.6286);">_</span>
      <span class="t" role="cell" style="left:1994.3px;top:1666px;font-size:31.2px;line-height:35px;color:#212121;transform:scaleX(0.9389);">Balance Sh...</span>
      <span class="t" role="cell" style="left:2195.8px;top:1666px;font-size:31.2px;line-height:35px;color:#212121;">Liabilities</span>
      <span class="t" role="cell" style="left:2398.3px;top:1666px;font-size:31.2px;line-height:35px;color:#212121;">Liabilities</span>
      <span class="t" role="cell" style="left:2871.5px;top:1666px;font-size:31.2px;line-height:35px;color:#212121;transform:scaleX(0.9942);">Posting</span>
    </div>
    <div class="g" role="row">
      <span class="t" role="cell" style="left:307.0px;top:1729px;font-size:31.2px;line-height:35px;color:#212121;font-weight:700;transform:scaleX(1.0424);">21999</span>
      <span class="t" role="cell" style="left:628.4px;top:1729px;font-size:31.2px;line-height:35px;color:#212121;font-weight:700;">Total, Long-term Liabilities</span>
      <span class="t" role="cell" style="left:1661.0px;top:1712px;font-size:46px;line-height:52px;color:#007f89;transform:scaleX(0.6286);">_</span>
      <span class="t" role="cell" style="left:1931.0px;top:1712px;font-size:46px;line-height:52px;color:#007f89;transform:scaleX(0.6286);">_</span>
      <span class="t" role="cell" style="left:1994.3px;top:1729px;font-size:31.2px;line-height:35px;color:#212121;transform:scaleX(0.9389);">Balance Sh...</span>
      <span class="t" role="cell" style="left:2195.8px;top:1729px;font-size:31.2px;line-height:35px;color:#212121;">Liabilities</span>
      <span class="t" role="cell" style="left:2398.3px;top:1729px;font-size:31.2px;line-height:35px;color:#212121;">Liabilities</span>
      <span class="t" role="cell" style="left:2871.5px;top:1729px;font-size:31.2px;line-height:35px;color:#212121;transform:scaleX(1.0053);">End-Total</span>
      <span class="t" role="cell" style="left:3075.6px;top:1729px;font-size:31.2px;line-height:35px;color:#212121;transform:scaleX(0.9574);">21000..21999</span>
    </div>
    <div class="g" role="row">
      <span class="t" role="cell" style="left:307.0px;top:1792px;font-size:31.2px;line-height:35px;color:#212121;font-weight:700;transform:scaleX(1.0424);">22000</span>
      <span class="t" role="cell" style="left:628.4px;top:1792px;font-size:31.2px;line-height:35px;color:#212121;font-weight:700;transform:scaleX(0.9834);">Current Liabilities</span>
      <span class="t" role="cell" style="left:1661.0px;top:1775px;font-size:46px;line-height:52px;color:#007f89;transform:scaleX(0.6286);">_</span>
      <span class="t" role="cell" style="left:1931.0px;top:1775px;font-size:46px;line-height:52px;color:#007f89;transform:scaleX(0.6286);">_</span>
      <span class="t" role="cell" style="left:1994.3px;top:1792px;font-size:31.2px;line-height:35px;color:#212121;transform:scaleX(0.9389);">Balance Sh...</span>
      <span class="t" role="cell" style="left:2195.8px;top:1792px;font-size:31.2px;line-height:35px;color:#212121;">Liabilities</span>
      <span class="t" role="cell" style="left:2398.3px;top:1792px;font-size:31.2px;line-height:35px;color:#212121;">Liabilities</span>
      <span class="t" role="cell" style="left:2871.5px;top:1792px;font-size:31.2px;line-height:35px;color:#212121;transform:scaleX(1.0158);">Begin-Total</span>
    </div>
    <div class="g" role="row">
      <span class="t" role="cell" style="left:308.2px;top:1855px;font-size:31.2px;line-height:35px;color:#007f89;transform:scaleX(0.9628);">22100</span>
      <span class="t" role="cell" style="left:651.2px;top:1855px;font-size:31.2px;line-height:35px;color:#212121;transform:scaleX(0.9784);">Accounts Payable, Domestic</span>
      <span class="t" role="cell" style="left:1531.2px;top:1855px;font-size:31.2px;line-height:35px;color:#007f89;transform:scaleX(0.9744);">-49,421.55</span>
      <span class="t" role="cell" style="left:1801.2px;top:1855px;font-size:31.2px;line-height:35px;color:#007f89;transform:scaleX(0.9744);">-49,421.55</span>
      <span class="t" role="cell" style="left:1994.3px;top:1855px;font-size:31.2px;line-height:35px;color:#212121;transform:scaleX(0.9389);">Balance Sh...</span>
      <span class="t" role="cell" style="left:2195.8px;top:1855px;font-size:31.2px;line-height:35px;color:#212121;">Liabilities</span>
      <span class="t" role="cell" style="left:2399.3px;top:1855px;font-size:31.2px;line-height:35px;color:#212121;transform:scaleX(0.9977);">Current Liabilities</span>
      <span class="t" role="cell" style="left:2871.5px;top:1855px;font-size:31.2px;line-height:35px;color:#212121;transform:scaleX(0.9942);">Posting</span>
    </div>
    <div class="g" role="row">
      <span class="t" role="cell" style="left:308.2px;top:1918px;font-size:31.2px;line-height:35px;color:#007f89;transform:scaleX(0.9628);">22200</span>
      <span class="t" role="cell" style="left:651.2px;top:1918px;font-size:31.2px;line-height:35px;color:#212121;transform:scaleX(0.9761);">Accounts Payable, Foreign</span>
      <span class="t" role="cell" style="left:1661.0px;top:1901px;font-size:46px;line-height:52px;color:#007f89;transform:scaleX(0.6286);">_</span>
      <span class="t" role="cell" style="left:1931.0px;top:1901px;font-size:46px;line-height:52px;color:#007f89;transform:scaleX(0.6286);">_</span>
      <span class="t" role="cell" style="left:1994.3px;top:1918px;font-size:31.2px;line-height:35px;color:#212121;transform:scaleX(0.9389);">Balance Sh...</span>
      <span class="t" role="cell" style="left:2195.8px;top:1918px;font-size:31.2px;line-height:35px;color:#212121;">Liabilities</span>
      <span class="t" role="cell" style="left:2399.3px;top:1918px;font-size:31.2px;line-height:35px;color:#212121;transform:scaleX(0.9977);">Current Liabilities</span>
      <span class="t" role="cell" style="left:2871.5px;top:1918px;font-size:31.2px;line-height:35px;color:#212121;transform:scaleX(0.9942);">Posting</span>
    </div>
    <div class="g" role="row">
      <span class="t" role="cell" style="left:308.2px;top:1981px;font-size:31.2px;line-height:35px;color:#007f89;transform:scaleX(0.9628);">22300</span>
      <span class="t" role="cell" style="left:651.2px;top:1981px;font-size:31.2px;line-height:35px;color:#212121;transform:scaleX(0.9936);">Advances from customers</span>
      <span class="t" role="cell" style="left:1661.0px;top:1964px;font-size:46px;line-height:52px;color:#007f89;transform:scaleX(0.6286);">_</span>
      <span class="t" role="cell" style="left:1931.0px;top:1964px;font-size:46px;line-height:52px;color:#007f89;transform:scaleX(0.6286);">_</span>
      <span class="t" role="cell" style="left:1994.3px;top:1981px;font-size:31.2px;line-height:35px;color:#212121;transform:scaleX(0.9389);">Balance Sh...</span>
      <span class="t" role="cell" style="left:2195.8px;top:1981px;font-size:31.2px;line-height:35px;color:#212121;">Liabilities</span>
      <span class="t" role="cell" style="left:2399.3px;top:1981px;font-size:31.2px;line-height:35px;color:#212121;transform:scaleX(0.9977);">Current Liabilities</span>
      <span class="t" role="cell" style="left:2871.5px;top:1981px;font-size:31.2px;line-height:35px;color:#212121;transform:scaleX(0.9942);">Posting</span>
    </div>
  </div>

  <!-- teaching tip -->
  <div id="tipwrap">
    <div class="abs tiparrow"></div>
    <div class="abs tipbox"></div>
  </div>
  <div class="abs btn"></div>
  <svg width="3719" height="2129" viewBox="0 0 3719 2129" fill="none">
    <path d="M972.8 288.2 L999.6 314.4 M999.6 288.2 L972.8 314.4" stroke="#212121" stroke-width="2.5"/>
  </svg>
  <div class="g" role="dialog">
      <h2 class="t" style="left:290.3px;top:281px;font-size:43.9px;line-height:49px;color:#212121;font-weight:700;transform:scaleX(0.9807);">About the chart of accounts</h2>
      <span class="t" style="left:291.8px;top:370px;font-size:31.2px;line-height:35px;color:#212121;">The chart of accounts is the core of the financials.</span>
      <span class="t" style="left:289.8px;top:412px;font-size:31.2px;line-height:35px;color:#212121;transform:scaleX(1.0103);">It's used to group income and expenses in the</span>
      <span class="t" style="left:289.8px;top:454px;font-size:31.2px;line-height:35px;color:#212121;">income statement and balance sheet. Define</span>
      <span class="t" style="left:289.8px;top:496px;font-size:31.2px;line-height:35px;color:#212121;transform:scaleX(1.0194);">indentation levels for a structured overview of your</span>
      <span class="t" style="left:291.8px;top:538px;font-size:31.2px;line-height:35px;color:#212121;transform:scaleX(0.9978);">financials. The chart of accounts should reflect how</span>
      <span class="t" style="left:291.8px;top:580px;font-size:31.2px;line-height:35px;color:#212121;transform:scaleX(0.9901);">the business is organized.</span>
      <span class="t" role="link" style="left:290.4px;top:682px;font-size:31.2px;line-height:35px;color:#006d75;transform:scaleX(0.9941);">Show Help</span>
      <span class="t" role="button" style="left:807.2px;top:681px;font-size:31.5px;line-height:36px;color:#ffffff;font-weight:700;transform:scaleX(0.9495);">Take a tour</span>
  </div>
</div>
</body>
</html>
